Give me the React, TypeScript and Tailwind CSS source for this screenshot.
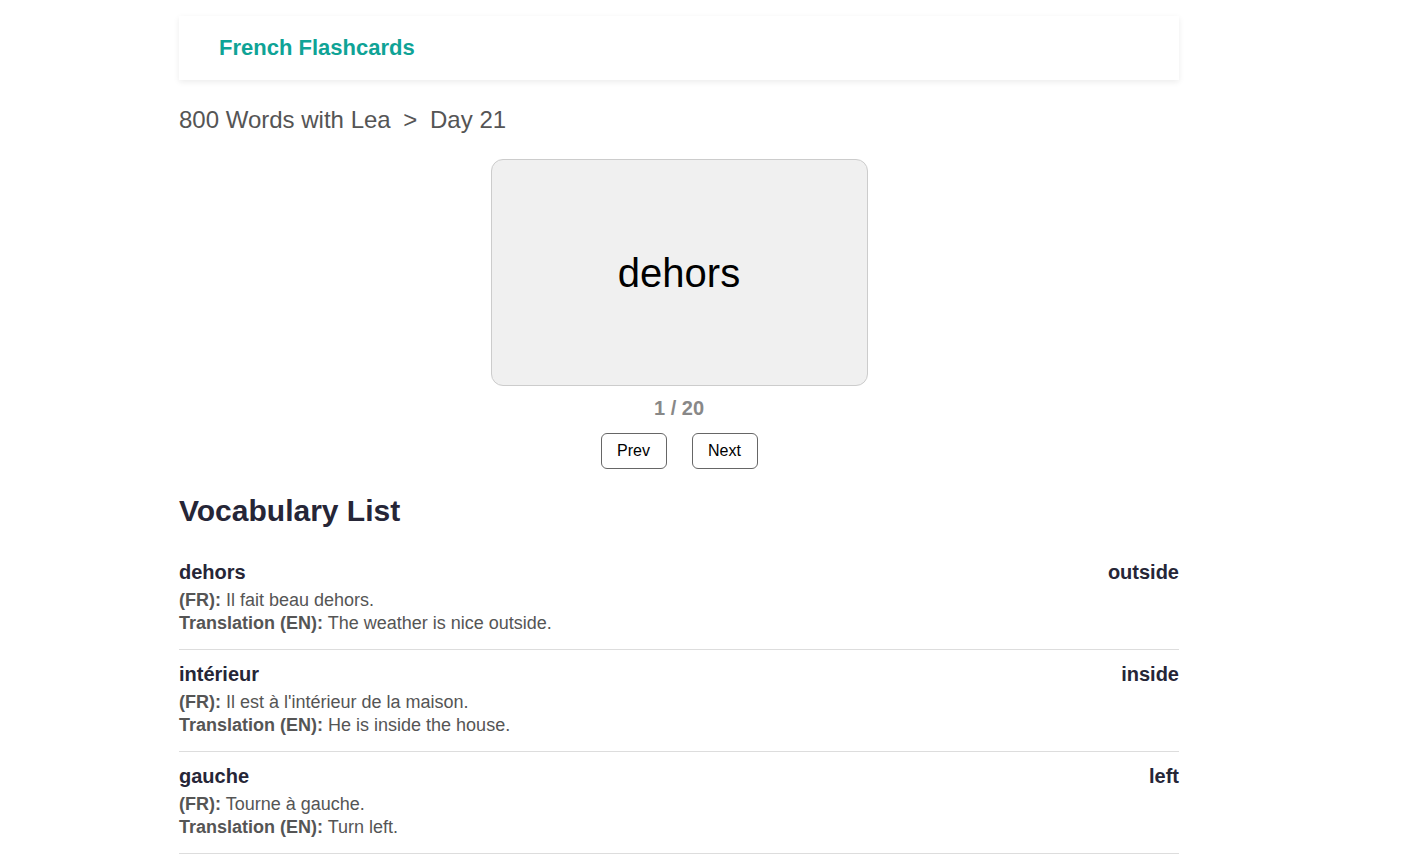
import { useState } from "react";

type Word = { fr: string; en: string; exFr: string; exEn: string };

const words: Word[] = [
  { fr: "dehors", en: "outside", exFr: "Il fait beau dehors.", exEn: "The weather is nice outside." },
  { fr: "intérieur", en: "inside", exFr: "Il est à l'intérieur de la maison.", exEn: "He is inside the house." },
  { fr: "gauche", en: "left", exFr: "Tourne à gauche.", exEn: "Turn left." },
];

const App = () => {
  const [index, setIndex] = useState(0);
  const [flipped, setFlipped] = useState(false);
  const current = words[index % words.length];

  return (
    <div className="min-h-screen bg-white font-['Liberation_Sans',Arial,sans-serif]">
      <div className="ml-[179px] w-[1000px] pt-[16px]">
        {/* Header */}
        <header className="bg-white shadow-[0_2px_6px_rgba(0,0,0,0.08)] px-10 py-[19px]">
          <h1 className="text-[22px] leading-[26px] font-bold text-[#0fa396]">French Flashcards</h1>
        </header>

        {/* Breadcrumb */}
        <div className="mt-[26px] text-[24px] leading-[28px] text-[#555]">
          800 Words with Lea <span className="mx-[6px]">&gt;</span> Day 21
        </div>

        {/* Flashcard */}
        <div className="flex flex-col items-center mt-[25px]">
          <button
            onClick={() => setFlipped(!flipped)}
            className="w-[377px] h-[227px] bg-[#f0f0f0] border border-[#ccc] rounded-[12px] flex items-center justify-center text-[40px] text-black"
          >
            {flipped ? current.en : current.fr}
          </button>
          <div className="mt-[10px] text-[20px] leading-[24px] font-bold text-[#888]">
            {index + 1} / 20
          </div>
          <div className="mt-[13px] flex gap-[25px]">
            <button
              onClick={() => {
                setIndex(Math.max(0, index - 1));
                setFlipped(false);
              }}
              className="w-[66px] h-[36px] border border-[#666] rounded-[6px] bg-white text-[16px] text-black"
            >
              Prev
            </button>
            <button
              onClick={() => {
                setIndex(Math.min(19, index + 1));
                setFlipped(false);
              }}
              className="w-[66px] h-[36px] border border-[#666] rounded-[6px] bg-white text-[16px] text-black"
            >
              Next
            </button>
          </div>
        </div>

        {/* Vocabulary list */}
        <h2 className="mt-[24px] text-[30px] leading-[36px] font-bold text-[#262637]">Vocabulary List</h2>
        <ul className="mt-[19px]">
          {words.map((w) => (
            <li key={w.fr} className="pt-[12px] pb-[14px] border-b border-[#ddd]">
              <div className="flex justify-between text-[20px] leading-[24px] font-bold text-[#262637]">
                <span>{w.fr}</span>
                <span>{w.en}</span>
              </div>
              <p className="mt-[5px] text-[18px] leading-[23px] text-[#555]">
                <b>(FR):</b> {w.exFr}
              </p>
              <p className="text-[18px] leading-[23px] text-[#555]">
                <b>Translation (EN):</b> {w.exEn}
              </p>
            </li>
          ))}
        </ul>
      </div>
    </div>
  );
};

export default App;
